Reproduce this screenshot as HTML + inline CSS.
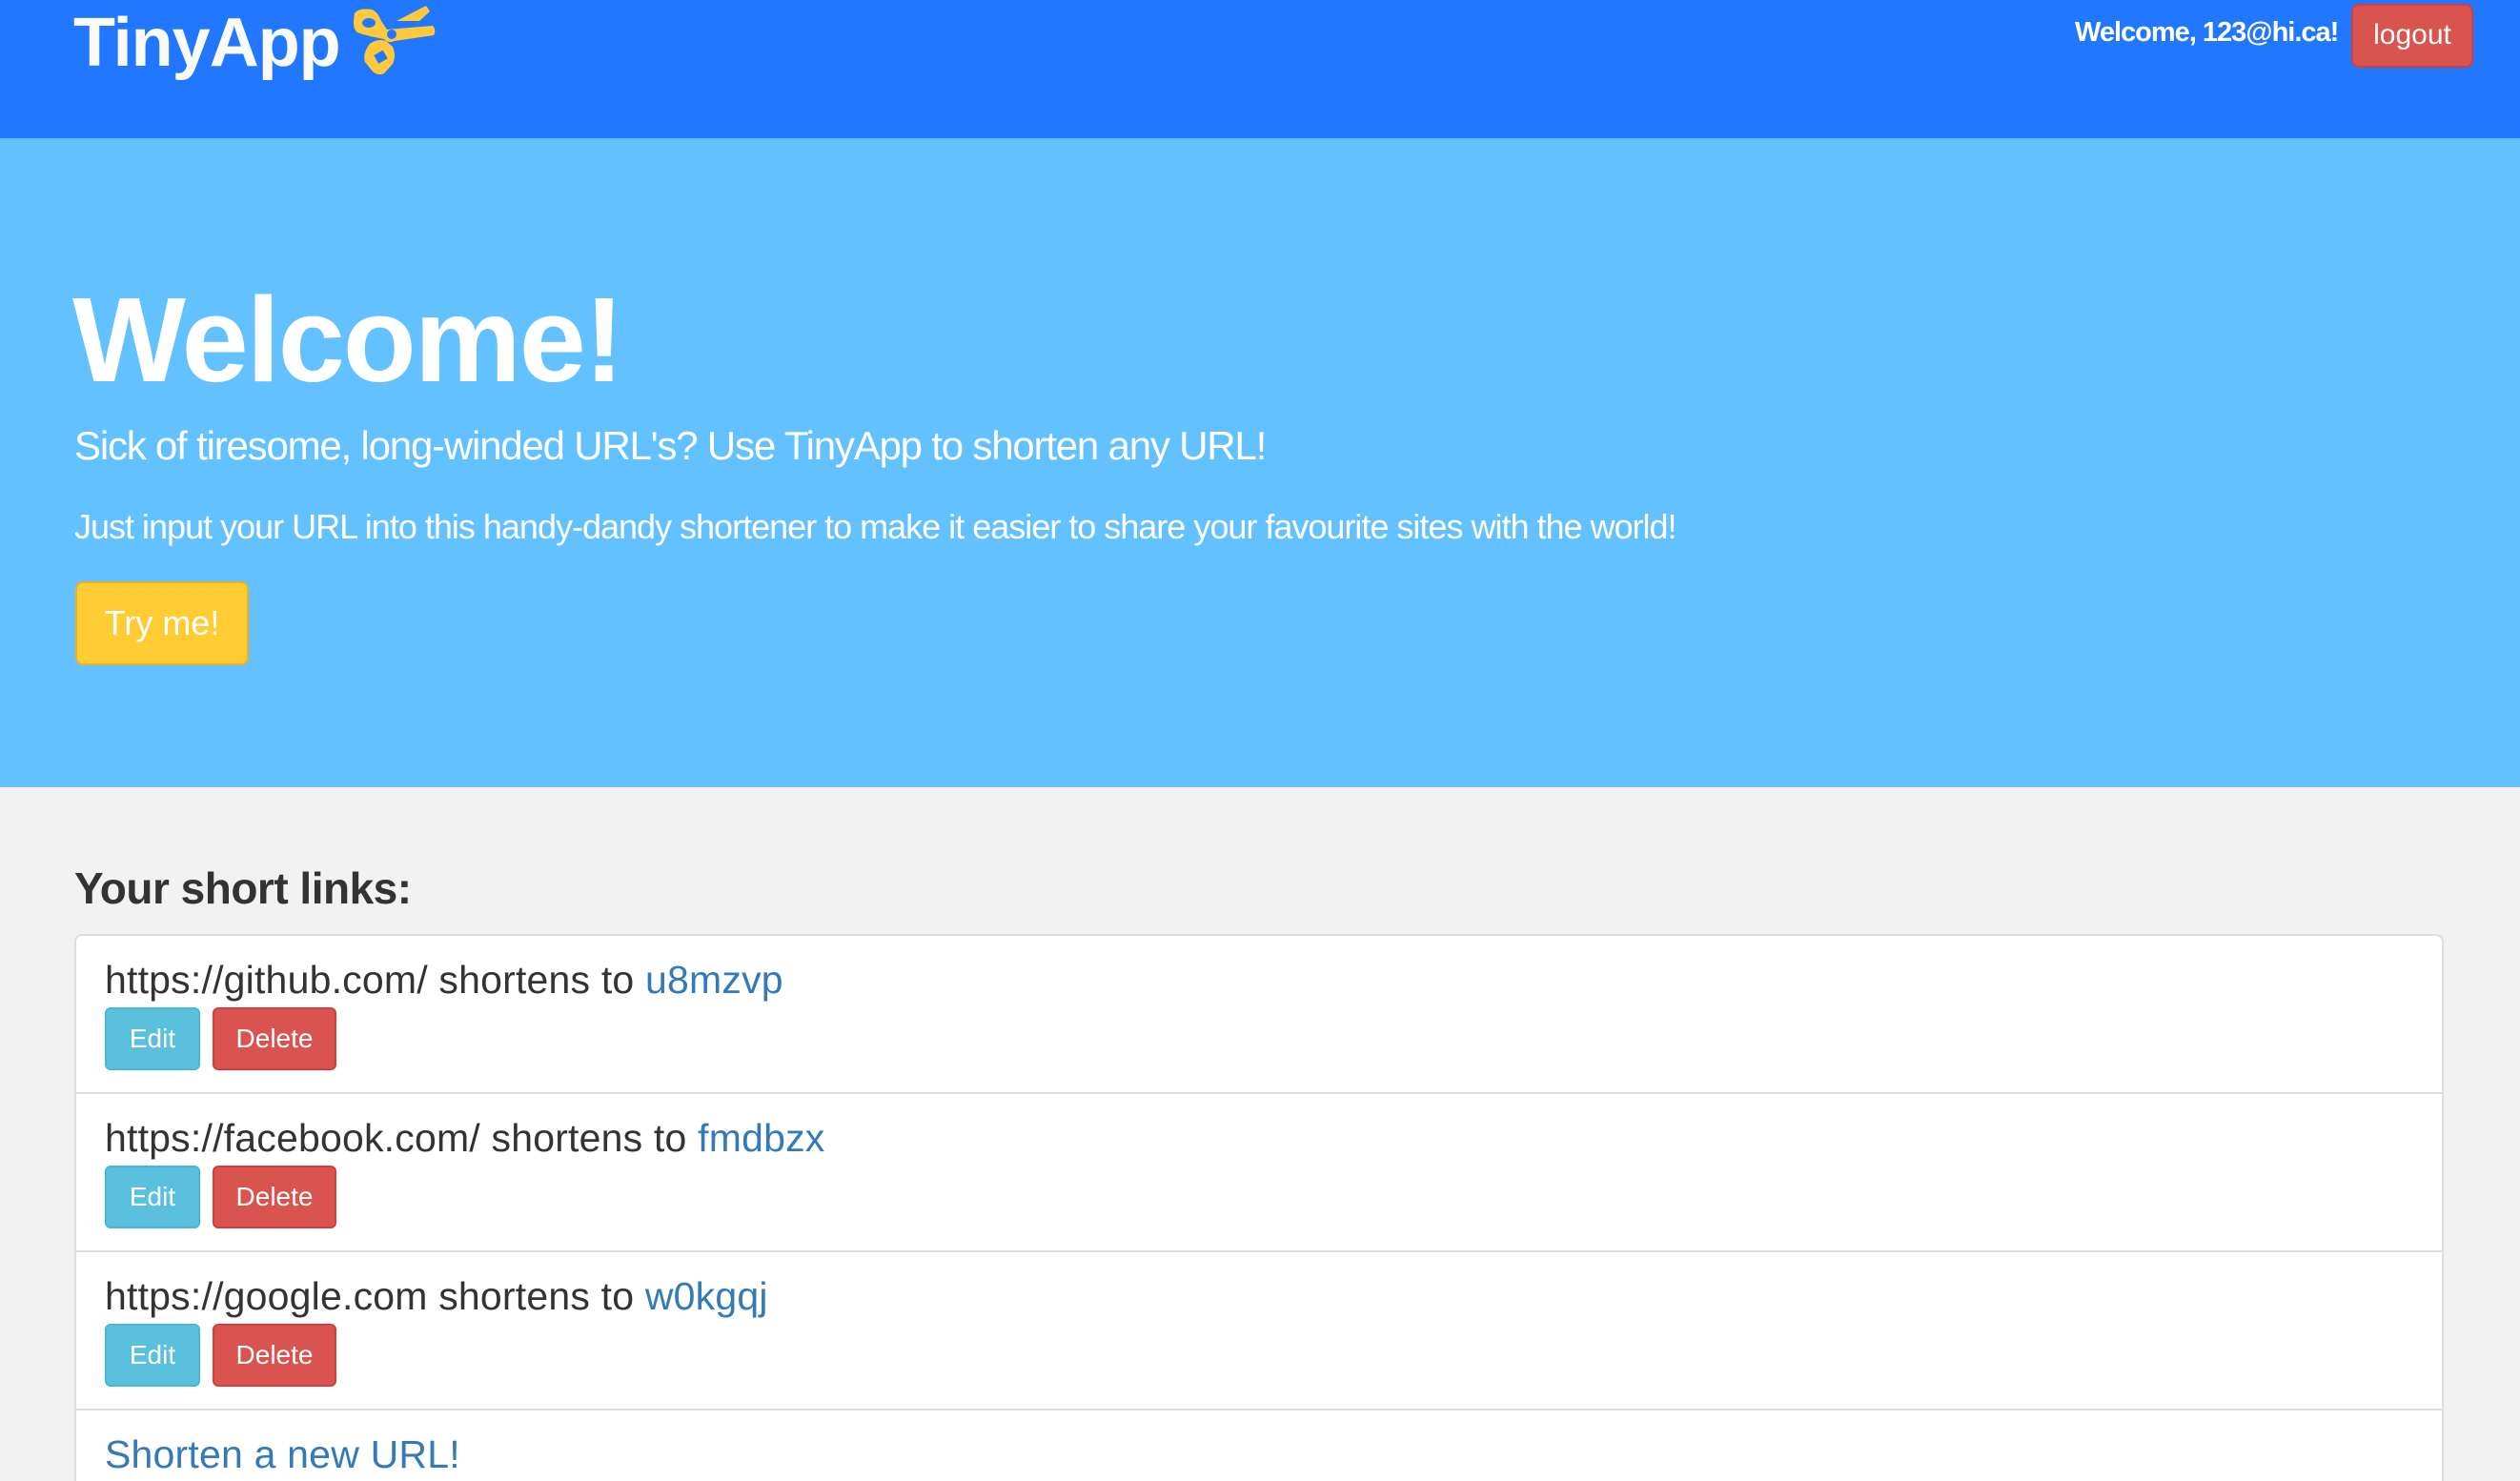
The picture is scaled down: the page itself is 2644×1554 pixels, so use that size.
<!DOCTYPE html>
<html><head><meta charset="utf-8"><style>
*{margin:0;padding:0;box-sizing:border-box}
html,body{width:2644px;height:1554px;overflow:hidden}
body{background:#f2f2f2;font-family:"Liberation Sans",Arial,sans-serif;position:relative}
.hdr{position:absolute;left:0;top:0;width:2644px;height:145px;background:#2277ff}
.logo{position:absolute;left:77px;top:4px;font-size:72px;font-weight:bold;color:#fafafa;letter-spacing:-1px}
.welc{position:absolute;left:2177px;top:18px;font-size:29px;font-weight:bold;color:#fff;letter-spacing:-1px}
.logout{position:absolute;left:2467px;top:4px;width:128px;height:67px;background:#d9534f;border:2px solid #d43f3a;border-radius:8px;color:#fff;font-size:30px;text-align:center;line-height:62px}
.jumbo{position:absolute;left:0;top:145px;width:2644px;height:681px;background:#64c1ff}
h1{position:absolute;left:76px;top:284px;font-size:126px;font-weight:bold;color:#fff;letter-spacing:-2px}
.sub{position:absolute;left:78px;top:444px;font-size:42px;color:#fff;font-weight:300;letter-spacing:-1.2px}
.par{position:absolute;left:78px;top:532px;font-size:36px;color:#fff;letter-spacing:-1px}
.try{position:absolute;left:79px;top:610px;width:182px;height:88px;background:#ffcc33;border:2px solid #f0b020;border-radius:8px;color:#fff;font-size:36px;text-align:center;line-height:84px}
h2{position:absolute;left:78px;top:905px;font-size:46px;font-weight:bold;color:#333;letter-spacing:-0.5px}
.list{position:absolute;left:78px;top:980px;width:2486px;height:574px;background:#fff;border:2px solid #ddd;border-bottom:none;border-radius:8px 8px 0 0;overflow:hidden}
.item{position:absolute;left:0;width:100%;height:166px;border-bottom:2px solid #ddd}
.t{position:absolute;left:30px;top:23px;font-size:41px;color:#333;letter-spacing:0.2px}
a{color:#337ab7;text-decoration:none}
.b{position:absolute;top:75px;height:66px;border-radius:6px;color:#fff;font-size:28px;text-align:center;line-height:62px}
.e{left:30px;width:100px;background:#5bc0de;border:2px solid #46b8da}
.d{left:143px;width:130px;background:#d9534f;border:2px solid #d43f3a}
</style></head><body>
<div class="hdr">
<div class="logo">TinyApp</div>
<svg style="position:absolute;left:360px;top:0" width="110" height="90" viewBox="0 0 110 90">
<g fill="#ffc83d">
<path d="M56 22 L87 6 L91 12 L80 22 Z"/>
<path d="M12 14 Q16 8 30 10 Q36 12 40 22 L46 31 L94 27 Q98 32 95 37 L54 43 Q47 46 43 41 L38 40 Q26 38 15 34 Q9 30 12 14 Z"/>
<path d="M28 46 Q36 40 45 43 L52 49 Q56 58 52 67 L43 77 Q37 80 31 75 L23 65 Q20 56 28 46 Z"/>
</g>
<ellipse cx="27" cy="24" rx="7" ry="5" fill="#2277ff"/>
<rect x="34" y="55" width="11" height="10" transform="rotate(-30 39 60)" fill="#2277ff"/>
<circle cx="51" cy="36" r="5" fill="#2277ff"/>
</svg>
<div class="welc">Welcome, 123@hi.ca!</div>
<div class="logout">logout</div>
</div>
<div class="jumbo"></div>
<h1>Welcome!</h1>
<div class="sub">Sick of tiresome, long-winded URL's? Use TinyApp to shorten any URL!</div>
<div class="par">Just input your URL into this handy-dandy shortener to make it easier to share your favourite sites with the world!</div>
<div class="try">Try me!</div>
<h2>Your short links:</h2>
<div class="list">
<div class="item" style="top:0"><div class="t">https://github.com/ shortens to <a>u8mzvp</a></div><div class="b e">Edit</div><div class="b d">Delete</div></div>
<div class="item" style="top:166px"><div class="t">https://facebook.com/ shortens to <a>fmdbzx</a></div><div class="b e">Edit</div><div class="b d">Delete</div></div>
<div class="item" style="top:332px"><div class="t">https://google.com shortens to <a>w0kgqj</a></div><div class="b e">Edit</div><div class="b d">Delete</div></div>
<div class="item" style="top:498px;border:none"><div class="t"><a>Shorten a new URL!</a></div></div>
</div>
</body></html>
